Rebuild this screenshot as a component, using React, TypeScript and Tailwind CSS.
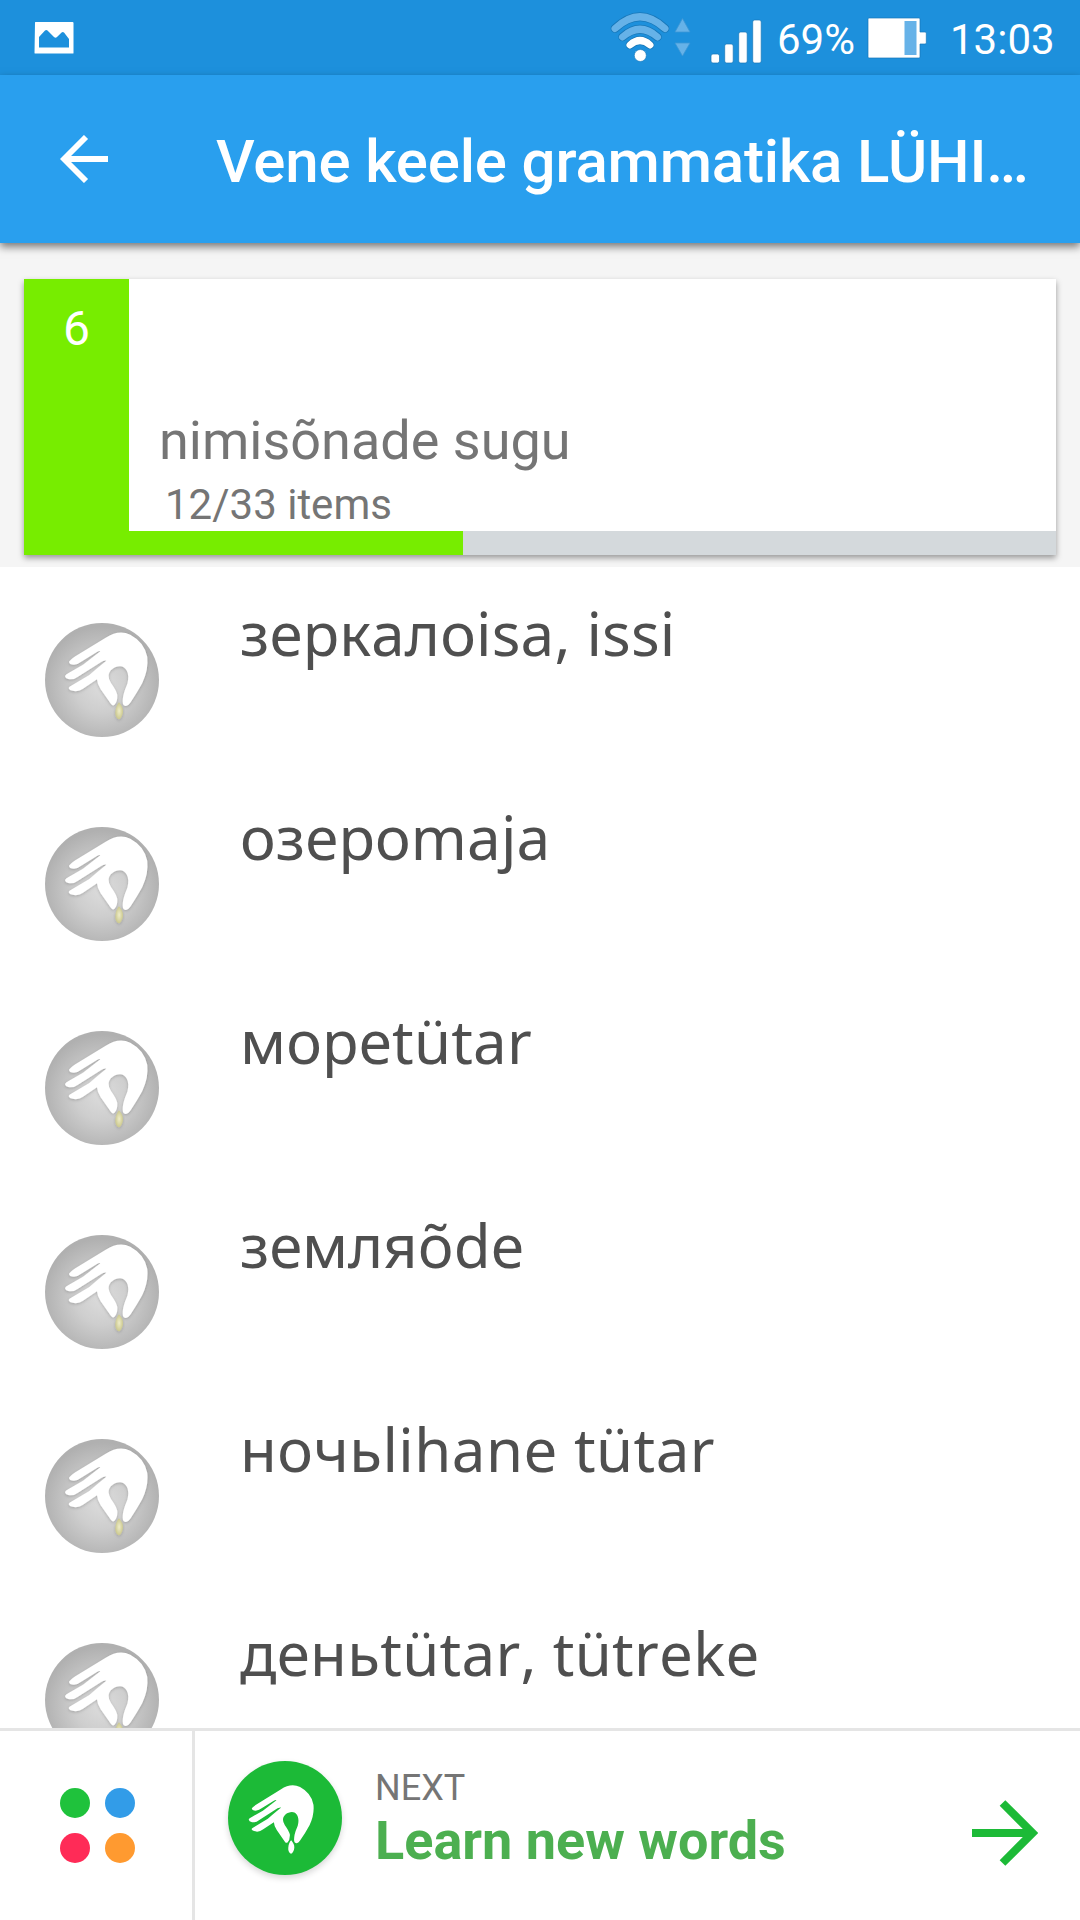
const words = [
  { text: 'зеркалоisa, issi', tracking: 'tracking-[0.16px]' },
  { text: 'озероmaja', tracking: 'tracking-[0.15px]' },
  { text: 'мореtütar', tracking: 'tracking-[0.2px]' },
  { text: 'земляõde', tracking: 'tracking-[-0.15px]' },
  { text: 'ночьlihane tütar', tracking: 'tracking-[0.47px]' },
  { text: 'деньtütar, tütreke', tracking: 'tracking-[0.29px]' },
];

const HAND =
  'M122 180 Q126 175 137 168 L228 112 Q268 86 302 103 Q345 126 353 170 Q357 208 338 248 Q324 274 302 307 Q291 323 281 313 Q277 307 281 285 Q284 270 293 250 C302 218 288 198 271 198 C253 198 237 212 237 226 Q236 235 244 248 Q260 270 263 284 Q264 304 254 314 Q249 318 244 311 L213 267 Q203 252 202 237 L160 265 Q151 272 138 273 Q118 271 117 263 Q117 260 127 255 L179 224 Q199 206 230 181 Q227 179 216 184 L145 229 Q134 238 119 237 Q107 235 106 227 Q107 222 118 217 L160 193 L212 153 Q209 151 202 155 L157 183 Q146 192 133 193 Q118 193 118 184 Z';
const SEED = 'M268 306 C275 314 281 323 280 334 C279 346 273 356 267 357 C259 353 256 344 257 334 C258 322 262 312 268 306 Z';

function SeedIcon() {
  return (
    <svg className="h-[114px] w-[114px] shrink-0" viewBox="46 68 342 342">
      <defs>
        <radialGradient id="disc" cx="0.5" cy="0.55" r="0.52">
          <stop offset="0" stopColor="#dcdcdc" />
          <stop offset="0.45" stopColor="#cecece" />
          <stop offset="1" stopColor="#b0b0b0" />
        </radialGradient>
        <radialGradient id="seed">
          <stop offset="0" stopColor="#efedc8" />
          <stop offset="1" stopColor="#cbc88e" />
        </radialGradient>
        <filter id="soft" x="-20%" y="-20%" width="140%" height="140%">
          <feDropShadow dx="0" dy="3" stdDeviation="4" floodColor="#000" floodOpacity="0.2" />
        </filter>
      </defs>
      <circle cx="217" cy="239" r="171" fill="url(#disc)" />
      <path d={SEED} fill="url(#seed)" filter="url(#soft)" />
      <path d={HAND} fill="#fff" filter="url(#soft)" />
    </svg>
  );
}

function LearnIcon() {
  return (
    <svg className="h-[114px] w-[114px] shrink-0 rounded-full bg-[#1cba37] shadow-[0_3px_6px_rgba(0,0,0,0.16)]" viewBox="0 0 342 342">
      <g fill="#fff" transform="translate(-21.4 -2.8) scale(0.787)">
        <path d={HAND} />
        <path d={SEED} />
      </g>
    </svg>
  );
}

function StatusBar() {
  return (
    <div className="flex h-[75px] shrink-0 items-center bg-[#1d90dc] text-[42px] leading-[48px] text-white">
      <svg className="ml-[34px] h-[34px] w-[40px]" viewBox="0 0 40 34">
        <path fill="#fff" fillRule="evenodd" d="M1 1.5Q1 1 1.5 1H38.5Q39.5 1 39.5 2V32Q39.5 32.5 39 32.5H1.500Q.5 32.500 .5 32ZM5 26.500H35V18L30 11.500Q28.800 10.700 27.600 11.500L23 16Q21.500 17.500 20 16L13.500 9.500Q12.300 8.500 11 9.500L5 16Z" />
      </svg>
      <svg className="ml-[536px] h-[75px] w-[168px]" viewBox="610 0 168 75">
        <g fill="none" strokeLinecap="round">
          <g stroke="#1877b8" strokeWidth="8.600">
            <path d="M615 28.500Q640 5 665 28.500M622.500 37Q640 21.500 657.500 37M630 45Q640 36 650 45" />
          </g>
          <g stroke="#66b2e8" strokeWidth="7">
            <path d="M615 28.500Q640 5 665 28.500M622.500 37Q640 21.500 657.500 37" />
          </g>
          <path stroke="#fff" strokeWidth="7" d="M630 45Q640 36 650 45" />
        </g>
        <circle cx="640.300" cy="55.500" r="6" fill="#fff" stroke="#1877b8" strokeWidth="0.600" />
        <g fill="#66b2e8" stroke="#3c97d5" strokeWidth="0.800" strokeLinejoin="round">
          <path d="M682.500 18.500L690 32H675ZM682.500 56L690 43H675Z" />
        </g>
        <g fill="#fff" stroke="#1877b8" strokeWidth="0.700">
          <rect x="711" y="54" width="8.500" height="9" rx="2" />
          <rect x="724.700" y="44" width="8.500" height="19" rx="2" />
          <rect x="738.700" y="32" width="8.500" height="31" rx="2" />
          <rect x="752.700" y="20" width="8.500" height="43" rx="2" />
        </g>
      </svg>
      <span className="-ml-px w-[90px] pt-[4px] whitespace-nowrap">69%</span>
      <svg className="h-[42px] w-[60px]" viewBox="0 0 60 42">
        <path fill="#fff" stroke="#1877b8" strokeWidth="0.700" d="M2 1H52Q53 1 53 2V15H58Q59.300 15 59.300 16V26Q59.300 27 58 27H53V40Q53 41 52 41H2Q1 41 1 40V2Q1 1 2 1Z" />
        <rect x="37.5" y="4" width="12" height="34" fill="#66b2e8" />
      </svg>
      <span className="ml-[23px] pt-[4px] whitespace-nowrap">13:03</span>
    </div>
  );
}

export default function App() {
  return (
    <div className="flex h-[1920px] w-[1080px] flex-col overflow-hidden bg-white font-[Roboto,sans-serif]">
      <StatusBar />
      <header className="z-10 flex h-[168px] shrink-0 items-center bg-[#299fee] text-white shadow-[0_4px_8px_rgba(0,0,0,0.5)]">
        <svg className="ml-[60px] h-[48px] w-[48px]" viewBox="0 0 48 48" fill="none" stroke="#fff" strokeWidth="5.800">
          <path d="M48 24H6M26 2L4 24L26 46" />
        </svg>
        <h1 className="ml-[108px] pt-[5px] text-[60px] leading-[72px] font-medium tracking-[-0.16px] whitespace-nowrap">Vene keele grammatika LÜHI…</h1>
      </header>

      <section className="h-[324px] shrink-0 bg-[#f5f5f5] px-6 pt-9">
        <div className="flex h-[276px] flex-col bg-white shadow-[0_3px_6px_rgba(0,0,0,0.38)]">
          <div className="flex h-[252px]">
            <div className="w-[105px] bg-[#77ed00] pt-[22px] text-center text-[48px] leading-[56px] text-white">6</div>
            <div className="pl-[30px] pt-[132px] text-[#757575]">
              <div className="text-[54px] leading-[60px]">nimisõnade sugu</div>
              <div className="pl-[6px] pt-[10px] text-[42px] leading-[48px]">12/33 items</div>
            </div>
          </div>
          <div className="h-6 bg-[#d4d9dc]">
            <div className="h-full w-[439px] bg-[#77ed00]" />
          </div>
        </div>
      </section>

      <ul className="min-h-0 flex-1 overflow-hidden">
        {words.map(({ text, tracking }) => (
          <li key={text} className="flex h-[204px] items-start pl-[45px] pt-[26px] font-['Noto_Sans',sans-serif] text-[60px] leading-[80px] text-[#4f4f4f] [font-kerning:none]">
            <div className="pt-[29.5px]">
              <SeedIcon />
            </div>
            <span className={`ml-[81px] whitespace-nowrap ${tracking}`}>{text}</span>
          </li>
        ))}
      </ul>

      <footer className="flex h-[192px] shrink-0 border-t-[3px] border-[#e5e5e5] bg-white">
        <div className="flex w-[195px] items-start border-r-[3px] border-[#e5e5e5] pl-[60px] pt-[57px]">
          <div className="grid grid-cols-2 gap-[15px]">
            <div className="size-[30px] rounded-full bg-[#1fc23c]" />
            <div className="size-[30px] rounded-full bg-[#329ce8]" />
            <div className="size-[30px] rounded-full bg-[#ff2b57]" />
            <div className="size-[30px] rounded-full bg-[#ff9a30]" />
          </div>
        </div>
        <div className="pl-[33px] pt-[30px]">
          <LearnIcon />
        </div>
        <div className="w-[597px] pl-[33px] pt-[35px]">
          <div className="text-[36px] leading-[44px] text-[#757575]">NEXT</div>
          <div className="pt-[1px] text-[54px] leading-[60px] font-bold text-[#4caf50]">Learn new words</div>
        </div>
        <svg className="mt-[69px] ml-[33px] h-[66px] w-[66px]" viewBox="0 0 66 66" fill="none" stroke="#1cba37" strokeWidth="8">
          <path d="M0 33H60M30.500 3L60.500 33L30.500 63" />
        </svg>
      </footer>
    </div>
  );
}
